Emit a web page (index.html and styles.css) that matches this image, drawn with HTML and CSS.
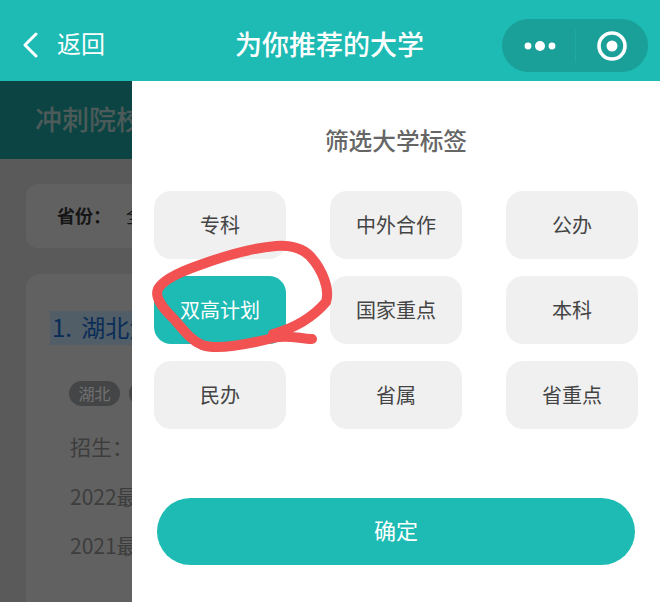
FILE: index.html
```html
<!DOCTYPE html>
<html lang="zh-CN">
<head>
  <meta charset="UTF-8">
  <meta name="viewport" content="width=device-width, initial-scale=1.0">
  <title>为你推荐的大学</title>
  <link rel="stylesheet" href="styles.css">
</head>
<body>
  <div class="page">
    <header class="navbar">
      <div class="nav-back">
        <svg class="back-icon" width="16" height="26" viewBox="0 0 16 26">
          <path d="M14 2 L3 13 L14 24" fill="none" stroke="#fff" stroke-width="3" stroke-linecap="round" stroke-linejoin="round"/>
        </svg>
        <span class="back-text">返回</span>
      </div>
      <div class="nav-title">为你推荐的大学</div>
      <div class="capsule">
        <svg width="34" height="12" viewBox="0 0 34 12">
          <circle cx="5" cy="6" r="3.4" fill="#fff"/>
          <circle cx="17" cy="6" r="5" fill="#fff"/>
          <circle cx="29" cy="6" r="3.4" fill="#fff"/>
        </svg>
        <span class="capsule-line"></span>
        <svg width="30" height="30" viewBox="0 0 30 30">
          <circle cx="15" cy="15" r="13" fill="none" stroke="#fff" stroke-width="3.6"/>
          <circle cx="15" cy="15" r="5.5" fill="#fff"/>
        </svg>
      </div>
    </header>

    <main class="main">
      <div class="tabbar">冲刺院校</div>
      <div class="filter-card"><strong>省份：</strong><span class="filter-value">全部</span></div>
      <div class="school-card">
        <div class="school-name"><span class="selected">1. 湖北大学</span></div>
        <div class="tags"><span class="tag">湖北</span><span class="tag">公办</span></div>
        <p class="info">招生：</p>
        <p class="info">2022最低分</p>
        <p class="info">2021最低分</p>
      </div>

      <div class="mask"></div>

      <aside class="drawer">
        <h2 class="drawer-title">筛选大学标签</h2>
        <div class="chips">
          <div class="chip">专科</div>
          <div class="chip">中外合作</div>
          <div class="chip">公办</div>
          <div class="chip chip-active">双高计划</div>
          <div class="chip">国家重点</div>
          <div class="chip">本科</div>
          <div class="chip">民办</div>
          <div class="chip">省属</div>
          <div class="chip">省重点</div>
        </div>
        <button class="confirm">确定</button>
      </aside>
    </main>

    <!-- hand drawn red circle on top of the screenshot -->
    <svg class="scribble" width="660" height="602" viewBox="0 0 660 602">
      <path d="M273 334 C295 328 314 316 326 302 C330 290 323 270 310 256 C302 248 292 245 276 246 C250 248 224 256 197 266 C180 272 163 280 158 289 C154 298 164 309 173 318 C182 328 190 340 202 345 C216 350 245 345 273 338 C288 334 300 339 312 339" fill="none" stroke="#f25252" stroke-width="10" stroke-linecap="round" stroke-linejoin="round"/>
    </svg>
  </div>
</body>
</html>
```

FILE: styles.css
```css
* {
  box-sizing: border-box;
}
body {
  margin: 0;
  font-family: "Noto Sans CJK SC", "Liberation Sans", sans-serif;
}
.page {
  position: relative;
  width: 660px;
  height: 602px;
  overflow: hidden;
  display: flex;
  flex-direction: column;
  background: #cdcdcd;
}

/* navbar */
.navbar {
  position: relative;
  height: 81px;
  flex-shrink: 0;
  display: flex;
  align-items: center;
  padding: 8px 12px 0 22px;
  background: #1dbbb4;
  color: #fff;
}
.nav-back {
  display: flex;
  align-items: center;
  gap: 19px;
  font-size: 24px;
  line-height: 1;
}
.back-text {
  margin-top: -3px;
}
.nav-title {
  position: absolute;
  left: 235px;
  top: 24px;
  font-size: 27px;
  font-weight: 500;
  line-height: 40px;
}
.capsule {
  margin-left: auto;
  margin-top: 2px;
  width: 146px;
  height: 53px;
  display: flex;
  align-items: center;
  padding-left: 21px;
  border-radius: 27px;
  background: #1a9f99;
}
.capsule-line {
  width: 1px;
  height: 32px;
  margin: 0 21px 0 18px;
  background: #1fa9a3;
}

/* page below the mask */
.main {
  position: relative;
  flex: 1;
}
.tabbar {
  height: 78px;
  padding-left: 35px;
  font-size: 27px;
  font-weight: 500;
  line-height: 76px;
  color: #aecdcb;
  background: #1a9c96;
}
.filter-card {
  height: 64px;
  margin: 25px 0 0 26px;
  padding-left: 31px;
  font-size: 18px;
  line-height: 62px;
  color: #333;
  background: #dedede;
  border-radius: 12px;
}
.filter-value {
  margin-left: 15px;
}
.school-card {
  height: 400px;
  margin: 26px 0 0 26px;
  padding: 37px 0 0 24px;
  background: #dedede;
  border-radius: 14px;
}
.school-name {
  font-size: 24px;
  line-height: 31px;
  word-spacing: 4px;
  color: #1567c8;
}
.selected {
  display: inline-block;
  height: 34px;
  padding: 0 4px 0 2px;
  background: #b8d3ea;
}
.tags {
  display: flex;
  gap: 9px;
  margin: 36px 0 0 19px;
}
.tag {
  width: 51px;
  height: 25px;
  font-size: 16px;
  line-height: 25px;
  text-align: center;
  color: #fff;
  background: #9a9da0;
  border-radius: 13px;
}
.info {
  margin: 0 0 0 20px;
  padding-top: 12px;
  height: 49px;
  font-size: 21px;
  line-height: 30px;
  color: #8c8c8c;
}
.tags + .info {
  margin-top: 14px;
  padding-top: 11px;
}
.mask {
  position: absolute;
  inset: 0;
  background: rgba(0, 0, 0, 0.56);
}

/* filter drawer */
.drawer {
  position: absolute;
  top: 0;
  right: 0;
  bottom: 0;
  left: 132px;
  padding: 0 22px;
  background: #fff;
}
.drawer-title {
  margin: 39px 0 0;
  font-size: 23.7px;
  font-weight: 500;
  line-height: 40px;
  text-align: center;
  color: #666;
}
.chips {
  display: grid;
  grid-template-columns: repeat(3, 132px);
  justify-content: space-between;
  row-gap: 17px;
  margin-top: 31px;
}
.chip {
  height: 68px;
  font-size: 20px;
  line-height: 67px;
  text-align: center;
  color: #444;
  background: #f0f0f0;
  border-radius: 17px;
}
.chip-active {
  color: #fff;
  background: #1dbbb4;
}
.confirm {
  display: block;
  width: 478px;
  height: 67px;
  margin: 69px 0 0 3px;
  padding: 0 0 6px;
  border: 0;
  border-radius: 34px;
  font-family: inherit;
  font-size: 22px;
  color: #fff;
  background: #1dbbb4;
}

.scribble {
  position: absolute;
  top: 0;
  left: 0;
  pointer-events: none;
}
```
